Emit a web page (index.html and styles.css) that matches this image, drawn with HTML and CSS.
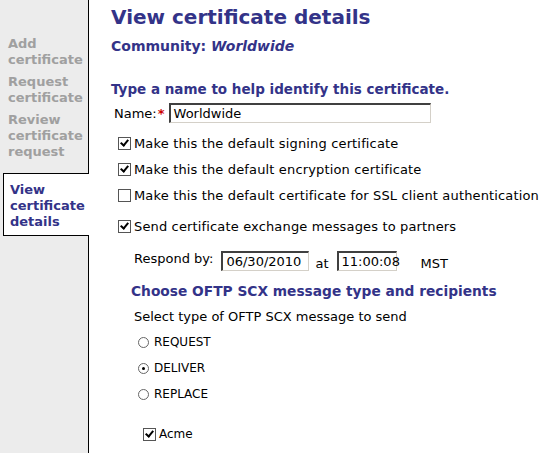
FILE: index.html
```html
<!DOCTYPE html>
<html>
<head>
<meta charset="utf-8">
<link rel="stylesheet" href="styles.css">
</head>
<body>
<div class="page">
  <nav class="side">
    <div class="side-top"></div>
    <div class="nav-item">Add<br>certificate</div>
    <div class="nav-item">Request<br>certificate</div>
    <div class="nav-item review">Review<br>certificate<br>request</div>
    <div class="nav-item active">View<br>certificate<br>details</div>
    <div class="side-fill"></div>
  </nav>
  <main class="content">
    <h1 class="title">View certificate details</h1>
    <div class="community">Community: <em>Worldwide</em></div>
    <h2 class="section">Type a name to help identify this certificate.</h2>
    <div class="name-row">
      <span class="lbl">Name:</span><span class="req">*</span>
      <span class="input name-input">Worldwide</span>
    </div>
    <div class="checks">
      <div class="check-row"><span class="cb checked"></span>Make this the default signing certificate</div>
      <div class="check-row"><span class="cb checked"></span>Make this the default encryption certificate</div>
      <div class="check-row"><span class="cb"></span>Make this the default certificate for SSL client authentication</div>
      <div class="check-row send"><span class="cb checked"></span>Send certificate exchange messages to partners</div>
    </div>
    <div class="respond">
      <span class="lbl">Respond by:</span>
      <span class="input date-input">06/30/2010</span>
      <span class="at">at</span>
      <span class="input time-input">11:00:08</span>
      <span class="tz">MST</span>
    </div>
    <h2 class="section sub">Choose OFTP SCX message type and recipients</h2>
    <div class="select-lbl">Select type of OFTP SCX message to send</div>
    <div class="radios">
      <div class="radio-row"><span class="rb"></span>REQUEST</div>
      <div class="radio-row"><span class="rb on"></span>DELIVER</div>
      <div class="radio-row"><span class="rb"></span>REPLACE</div>
    </div>
    <div class="partner-row"><span class="cb checked"></span>Acme</div>
  </main>
</div>
</body>
</html>
```
FILE: styles.css
```css
html, body {
  margin: 0;
  padding: 0;
  background: #ffffff;
}
body {
  font-family: "DejaVu Sans", Verdana, sans-serif;
  font-size: 13px;
  color: #000;
  overflow: hidden;
}
.page {
  display: flex;
  width: 553px;
  height: 453px;
}
.side {
  width: 89px;
  flex: none;
  display: flex;
  flex-direction: column;
  background: #ececec;
}
.side-top {
  height: 36px;
  flex: none;
  border-right: 1px solid #000;
}
.nav-item {
  font-weight: bold;
  font-size: 13px;
  line-height: 16px;
  color: #a0a0a0;
  padding: 0 0 6px 8px;
  border-right: 1px solid #000;
}
.nav-item.review {
  padding-bottom: 13px;
}
.nav-item.active {
  background: #fff;
  color: #333388;
  margin-left: 3px;
  padding: 8px 0 5px 6px;
  border: 1px solid #000;
  border-right: none;
}
.side-fill {
  flex: 1;
  border-right: 1px solid #000;
}
.content {
  flex: 1;
  padding-left: 22px;
  padding-top: 5px;
}
.title {
  margin: 0;
  font-size: 20px;
  line-height: 24px;
  color: #333388;
  font-weight: bold;
}
.community {
  margin-top: 9px;
  font-weight: bold;
  font-size: 14px;
  color: #333388;
  line-height: 16px;
}
.community em {
  font-style: italic;
}
.section {
  margin: 26px 0 0;
  font-size: 13.5px;
  line-height: 18px;
  color: #333388;
  font-weight: bold;
}
.name-row {
  display: flex;
  align-items: center;
  margin-top: 4px;
  padding-left: 3px;
  height: 22px;
}
.lbl {
  font-size: 13px;
}
.req {
  color: #cc0000;
  font-weight: bold;
  margin-left: 1px;
  margin-right: 4px;
  font-size: 13px;
}
.input {
  display: inline-block;
  box-sizing: border-box;
  border-style: solid;
  border-width: 2px 1px 1px 2px;
  border-color: #404040 #d4d0c8 #d4d0c8 #404040;
  background: #fff;
  font-size: 13px;
  line-height: 17px;
  padding: 0 3px;
  height: 20px;
}
.name-input {
  width: 262px;
}
.checks {
  margin-top: 6px;
  letter-spacing: 0.15px;
}
.check-row {
  display: flex;
  align-items: center;
  padding-left: 7px;
  height: 26px;
}
.check-row.send {
  margin-top: 5px;
}
.cb {
  box-sizing: border-box;
  width: 13px;
  height: 13px;
  border: 1px solid #555;
  background: #fff;
  margin-right: 3px;
  flex: none;
  position: relative;
}
.cb.checked::after {
  content: "";
  position: absolute;
  left: 3px;
  top: 0px;
  width: 3px;
  height: 6px;
  border: solid #000;
  border-width: 0 2px 2px 0;
  transform: rotate(40deg);
}
.respond {
  display: flex;
  align-items: center;
  padding-left: 23px;
  margin-top: 11px;
  height: 22px;
}
.respond .lbl {
  margin-right: 8px;
  position: relative;
  top: -3px;
}
.date-input {
  width: 88px;
}
.at {
  margin: 0 8px 0 6px;
  position: relative;
  top: 2px;
}
.time-input {
  width: 60px;
}
.tz {
  margin-left: 24px;
  position: relative;
  top: 2px;
}
.section.sub {
  margin-top: 10px;
  padding-left: 20px;
  font-size: 13.75px;
}
.select-lbl {
  padding-left: 23px;
  margin-top: 9px;
  line-height: 16px;
}
.radios {
  margin-top: 4px;
}
.radio-row {
  display: flex;
  align-items: center;
  padding-left: 27px;
  height: 26px;
  font-size: 12px;
}
.rb {
  box-sizing: border-box;
  width: 11px;
  height: 11px;
  border-radius: 50%;
  border: 1px solid #666;
  background: #fff;
  margin-right: 5px;
  position: relative;
}
.rb.on::after {
  content: "";
  position: absolute;
  left: 3px;
  top: 3px;
  width: 3px;
  height: 3px;
  border-radius: 50%;
  background: #000;
}
.partner-row {
  display: flex;
  align-items: center;
  padding-left: 32px;
  margin-top: 20px;
  font-size: 12px;
}
```
